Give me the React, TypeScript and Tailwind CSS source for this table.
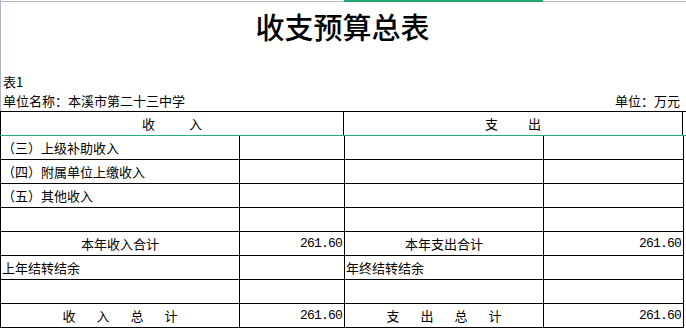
import React from 'react';

type Cell = { text?: string; kind?: 'left' | 'center' | 'num' | 'spread' };

const ROWS: Cell[][] = [
  [{ text: '（三）上级补助收入' }, {}, {}, {}],
  [{ text: '（四）附属单位上缴收入' }, {}, {}, {}],
  [{ text: '（五）其他收入' }, {}, {}, {}],
  [{}, {}, {}, {}],
  [
    { text: '本年收入合计', kind: 'center' },
    { text: '261.60', kind: 'num' },
    { text: '本年支出合计', kind: 'center' },
    { text: '261.60', kind: 'num' },
  ],
  [{ text: '上年结转结余' }, {}, { text: '年终结转结余' }, {}],
  [{}, {}, {}, {}],
  [
    { text: '收入总计', kind: 'spread' },
    { text: '261.60', kind: 'num' },
    { text: '支出总计', kind: 'spread' },
    { text: '261.60', kind: 'num' },
  ],
];

const COL_W = ['w-[239px]', 'w-[105px]', 'w-[199px]', 'w-[140px]'];

function CellBody({ cell }: { cell: Cell }) {
  if (!cell.text) return null;
  if (cell.kind === 'num') {
    return (
      <span className="ml-auto pr-[2px] font-['Liberation_Mono',monospace] text-[13px] tracking-[-0.8px]">
        {cell.text}
      </span>
    );
  }
  if (cell.kind === 'center') {
    return <span className="mx-auto">{cell.text}</span>;
  }
  if (cell.kind === 'spread') {
    return (
      <span className="mx-auto flex gap-[21px]">
        {cell.text.split('').map((ch, i) => (
          <span key={i}>{ch}</span>
        ))}
      </span>
    );
  }
  return <span className="pl-[1px]">{cell.text}</span>;
}

export default function App() {
  return (
    <div className="w-[686px] h-[330px] overflow-hidden bg-white text-black font-['Noto_Sans_CJK_SC',sans-serif] text-[13px] leading-[13px]">
      {/* sheet top area */}
      <div className="h-[111px] border-l border-[#aab3cc] flex flex-col">
        <div className="h-[2px] flex">
          <div className="w-[343px] border-b border-[#b4b8c8]" />
          <div className="w-[199px] bg-[#21a86f]" />
          <div className="flex-1 border-b border-[#b4b8c8]" />
        </div>
        <div className="mt-[9px] w-[683px] h-[30px] text-center text-[29px] leading-[30px] font-medium">
          收支预算总表
        </div>
        <div className="mt-[34px] h-[13px] pl-[2px]">表1</div>
        <div className="mt-[6px] h-[13px] flex justify-between pl-[2px] pr-[6px]">
          <span>单位名称：本溪市第二十三中学</span>
          <span>单位：万元</span>
        </div>
      </div>

      {/* table */}
      <div className="w-[686px]">
        <div className="flex border-t border-b border-t-black border-b-[#26ad7b] h-[25px]">
          <div className="w-[344px] border-l border-r border-black flex items-center justify-center gap-[34px]">
            <span>收</span>
            <span>入</span>
          </div>
          <div className="w-[339px] border-r border-black flex items-center justify-center gap-[30px]">
            <span>支</span>
            <span>出</span>
          </div>
        </div>
        {ROWS.map((row, r) => (
          <div key={r} className="flex h-[24px]">
            <div className="flex border-l border-black">
              {row.map((cell, c) => (
                <div
                  key={c}
                  className={`${COL_W[c]} h-[24px] border-r border-b border-black flex items-center`}
                >
                  <CellBody cell={cell} />
                </div>
              ))}
            </div>
          </div>
        ))}
      </div>
    </div>
  );
}
